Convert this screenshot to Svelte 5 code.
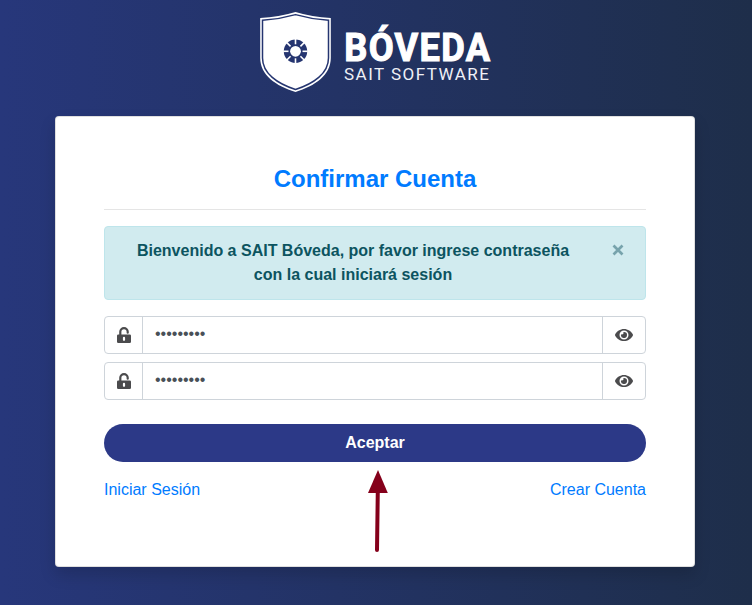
<script>
  const fields = $state([
    { id: 'password', value: '•••••••••' },
    { id: 'confirm', value: '•••••••••' }
  ]);
  const spokes = [0, 45, 90, 135, 180, 225, 270, 315];
</script>

<main>
  <header>
    <svg width="240" height="88" viewBox="255 8 240 88" role="img" aria-label="Bóveda SAIT Software">
      <path d="M295.500 12Q312 17 330.800 18V58C330.800 75 315 86 295.500 92C276 86 260.200 75 260.200 58V18Q279 17 295.500 12Z" fill="#fff" />
      <path d="M295.500 14.600Q312 19.300 328.500 20.300V58C328.500 73.500 313.500 83.800 295.500 89.500C277.500 83.800 262.500 73.500 262.500 58V20.300Q279 19.300 295.500 14.600Z" fill="none" stroke="#253570" stroke-width="1.500" />
      <circle cx="295.500" cy="51.300" r="11.700" fill="#253570" />
      {#each spokes as angle}
        <path d="M295.500 39V44.300" stroke="#fff" stroke-width="1.600" transform="rotate({angle} 295.500 51.300)" />
      {/each}
      <circle cx="295.500" cy="51.300" r="5.400" fill="#fff" />
      <text transform="translate(344.300 61) scale(0.94 1)" class="brand" textLength="155" lengthAdjust="spacing">BÓVEDA</text>
      <text x="344" y="79.800" class="sub" textLength="145" lengthAdjust="spacing">SAIT SOFTWARE</text>
    </svg>
  </header>

  <section class="card">
    <h1>Confirmar Cuenta</h1>
    <hr />
    <div class="alert">
      <p>Bienvenido a SAIT Bóveda, por favor ingrese contraseña con la cual iniciará sesión</p>
      <button class="close" aria-label="Cerrar">
        <svg width="12" height="12" viewBox="0 0 12 12"><path d="M1.500 1.500L10.500 10.500M10.500 1.500L1.500 10.500" stroke="#77a3ac" stroke-width="2.700" /></svg>
      </button>
    </div>

    {#each fields as field (field.id)}
      <div class="group">
        <span class="addon lock">
          <svg width="14" height="16" viewBox="0 0 14 16">
            <path d="M3.300 8.500V4.800a3.700 3.700 0 0 1 7.400 0V5.700" fill="none" stroke="#4b4b4d" stroke-width="2.200" stroke-linecap="round" />
            <path fill-rule="evenodd" fill="#4b4b4d" d="M1.300 7.500h11.400a1.300 1.300 0 0 1 1.300 1.300v5.900a1.300 1.300 0 0 1-1.300 1.300h-11.400A1.300 1.300 0 0 1 0 14.700v-5.900a1.300 1.300 0 0 1 1.300-1.300ZM5.900 10.800v2a1.100 1.100 0 0 0 2.200 0v-2a1.100 1.100 0 0 0-2.200 0Z" />
          </svg>
        </span>
        <span class="value">{field.value}</span>
        <span class="addon eye">
          <svg width="18" height="16" viewBox="0 0 576 512">
            <path fill="#4b4b4d" fill-rule="evenodd" d="M572.520 241.400C518.290 135.590 410.930 64 288 64S57.680 135.640 3.480 241.410a32.350 32.350 0 0 0 0 29.190C57.710 376.410 165.070 448 288 448s230.320-71.640 284.520-177.410a32.350 32.350 0 0 0 0-29.190zM288 400a144 144 0 1 1 144-144 143.930 143.930 0 0 1-144 144zm0-240a95.310 95.310 0 0 0-25.310 3.790 47.850 47.850 0 0 1-66.900 66.900A95.780 95.780 0 1 0 288 160z" />
          </svg>
        </span>
      </div>
    {/each}

    <button class="submit">Aceptar</button>
    <nav>
      <a href="#login">Iniciar Sesión</a>
      <a href="#signup">Crear Cuenta</a>
    </nav>
  </section>

  <svg class="arrow" width="24" height="84" viewBox="0 0 24 84" aria-hidden="true">
    <path d="M11.800 20L11 80" stroke="#85001b" stroke-width="4" stroke-linecap="round" />
    <path d="M12 0L21.800 23H2Z" fill="#85001b" />
  </svg>
</main>

<style>
  :global(body) {
    margin: 0;
  }
  main {
    position: relative;
    box-sizing: border-box;
    height: 605px;
    overflow: hidden;
    padding: 8px 57px 0 55px;
    background: linear-gradient(to right, #27377b, #1e2e4a);
    font: 16px/24px 'Liberation Sans', Arial, sans-serif;
  }
  header {
    display: flex;
    justify-content: center;
    height: 108px;
  }
  .brand {
    font: 700 38.5px Roboto, sans-serif;
    fill: #fff;
    stroke: #fff;
    stroke-width: 1.1px;
  }
  .sub {
    font: 400 17px Roboto, sans-serif;
    fill: #eef0f6;
  }
  .card {
    box-sizing: border-box;
    height: 451px;
    padding: 48px;
    border: 1px solid rgba(0, 0, 0, 0.125);
    border-radius: 4px;
    background: #fff;
    box-shadow: 0 8px 16px rgba(0, 0, 0, 0.15);
  }
  h1 {
    margin: 0 0 16px;
    font-size: 24px;
    line-height: 28px;
    color: #007bff;
    text-align: center;
  }
  hr {
    margin: 0 0 16px;
    border: 0;
    border-top: 1px solid rgba(0, 0, 0, 0.1);
  }
  .alert {
    box-sizing: border-box;
    display: flex;
    justify-content: space-between;
    height: 74px;
    margin-bottom: 16px;
    padding: 12px 21px 12px 20px;
    border: 1px solid #bee5eb;
    border-radius: 4px;
    background: #d1ebef;
    color: #0c5460;
    font-weight: 700;
    text-align: center;
  }
  .alert p {
    width: 456px;
    margin: 0;
  }
  .close {
    display: flex;
    height: 22px;
    padding: 0;
    border: 0;
    background: none;
    align-items: center;
  }
  .group {
    box-sizing: border-box;
    display: flex;
    height: 38px;
    margin-bottom: 8px;
    border: 1px solid #ced4da;
    border-radius: 4px;
  }
  .addon {
    box-sizing: border-box;
    display: flex;
    align-items: center;
    justify-content: center;
  }
  .lock {
    width: 38px;
    border-right: 1px solid #ced4da;
  }
  .eye {
    width: 43px;
    border-left: 1px solid #ced4da;
  }
  .value {
    flex: 1;
    padding: 5px 12px;
    color: #495057;
  }
  .submit {
    display: block;
    width: 100%;
    height: 38px;
    margin: 24px 0 16px;
    padding: 0;
    border: 0;
    border-radius: 19px;
    background: #2c3987;
    color: #fff;
    font: 700 16px/24px 'Liberation Sans', Arial, sans-serif;
  }
  nav {
    display: flex;
    justify-content: space-between;
  }
  a {
    color: #007bff;
    text-decoration: none;
  }
  .arrow {
    position: absolute;
    left: 366px;
    top: 470px;
  }
</style>
